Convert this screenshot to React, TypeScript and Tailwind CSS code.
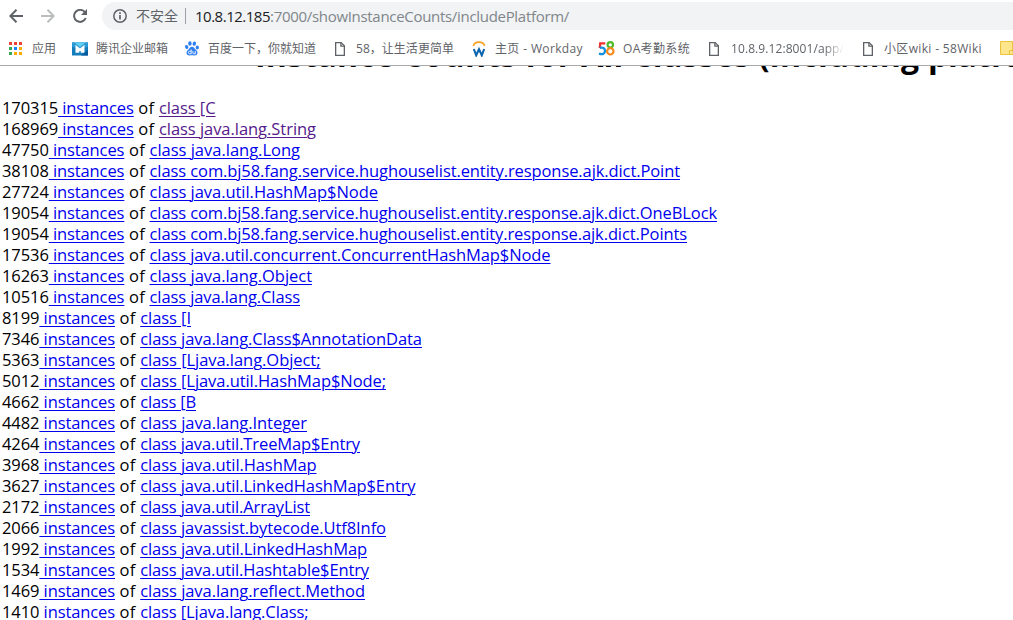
import { useLayoutEffect, useRef } from "react";
import type { ReactNode } from "react";

/** Text tracked so that it fills exactly the given width. */
function Fit({ text, width, className = "" }: { text: string; width: number; className?: string }) {
  const ref = useRef<HTMLSpanElement>(null);
  useLayoutEffect(() => {
    const el = ref.current;
    if (!el) return;
    el.style.letterSpacing = "0px";
    const natural = el.getBoundingClientRect().width;
    el.style.letterSpacing = `${(width - natural) / text.length}px`;
  }, [text, width]);
  return (
    <span ref={ref} className={`shrink-0 whitespace-pre ${className}`}>
      {text}
    </span>
  );
}

type Row = [count: string, name: string, end: number];

const rows: Row[] = [
  ["170315", "[C", 215.5],
  ["168969", "java.lang.String", 316],
  ["47750", "java.lang.Long", 300],
  ["38108", "com.bj58.fang.service.hughouselist.entity.response.ajk.dict.Point", 680],
  ["27724", "java.util.HashMap$Node", 378],
  ["19054", "com.bj58.fang.service.hughouselist.entity.response.ajk.dict.OneBLock", 717],
  ["19054", "com.bj58.fang.service.hughouselist.entity.response.ajk.dict.Points", 687],
  ["17536", "java.util.concurrent.ConcurrentHashMap$Node", 550.5],
  ["16263", "java.lang.Object", 312],
  ["10516", "java.lang.Class", 300],
  ["8199", "[I", 191],
  ["7346", "java.lang.Class$AnnotationData", 422],
  ["5363", "[Ljava.lang.Object;", 320.5],
  ["5012", "[Ljava.util.HashMap$Node;", 386],
  ["4662", "[B", 196],
  ["4482", "java.lang.Integer", 307],
  ["4264", "java.util.TreeMap$Entry", 360],
  ["3968", "java.util.HashMap", 316.5],
  ["3627", "java.util.LinkedHashMap$Entry", 415.5],
  ["2172", "java.util.ArrayList", 310],
  ["2066", "javassist.bytecode.Utf8Info", 386],
  ["1992", "java.util.LinkedHashMap", 367],
  ["1534", "java.util.Hashtable$Entry", 369],
  ["1469", "java.lang.reflect.Method", 365],
  ["1410", "[Ljava.lang.Class;", 308.5],
];

function InstanceRow({ row: [count, name, end], visited }: { row: Row; visited: boolean }) {
  const digits = count.length * 9.35;
  const start = 2 + digits + 75.6 + 25.2;
  const link = "underline decoration-1 underline-offset-2";
  return (
    <div className="flex h-[21px]">
      <Fit text={count} width={digits} />
      <a className="flex text-[#0000ee]">
        <Fit text=" instances" width={75.6} className={link} />
      </a>
      <Fit text=" of " width={25.2} />
      <a className={`flex ${visited ? "text-[#551a8b]" : "text-[#0000ee]"}`}>
        <Fit text={`class ${name}`} width={end - start} className={link} />
      </a>
    </div>
  );
}

function AppsIcon() {
  const colors = ["#ea4335", "#ea4335", "#ea4335", "#34a853", "#1a82f7", "#fbab00", "#34a853", "#fbab00", "#fbab00"];
  return (
    <svg width="14" height="14" viewBox="0 0 14 14" shapeRendering="crispEdges">
      {colors.map((c, i) => (
        <rect key={i} x={(i % 3) * 5} y={Math.floor(i / 3) * 5} width="3" height="3" fill={c} />
      ))}
    </svg>
  );
}

function MailIcon() {
  return (
    <svg width="16" height="14" viewBox="0 0 16 14">
      <rect width="16" height="13" y=".5" fill="#147dbb" />
      <path d="M0 .5h16v4L8 8 0 4.500z" fill="#2b9bd7" />
      <path d="M2.500.5h11L8 5z" fill="#62d0f5" />
      <path d="M3.500 2.800 8 6.500l4.500-3.700v7.900h-9z" fill="#fff" />
      <path d="M6.700 10.700 8 8.500l1.300 2.200z" fill="#147dbb" />
      <path d="m12.500 10.700 3.500-3v5.800H9z" fill="#075b9c" />
    </svg>
  );
}

function BaiduIcon() {
  return (
    <svg width="14" height="15" viewBox="0 0 14 15" fill="#2d7ff0">
      <ellipse cx="4.900" cy="2.500" rx="1.700" ry="2.300" />
      <ellipse cx="9.300" cy="2.600" rx="1.700" ry="2.200" transform="rotate(12 9.300 2.600)" />
      <ellipse cx="1.700" cy="6" rx="1.600" ry="2.100" transform="rotate(-12 1.700 6)" />
      <ellipse cx="12.300" cy="6.500" rx="1.600" ry="2.100" />
      <path d="M7 5.800c1.800 0 2.500 1.700 3.800 2.900 1.300 1.100 2 2.200 1.600 3.800-.4 1.700-2 2.100-3.400 1.900-1.300-.2-2.700-.2-4 0-1.400.2-3-.2-3.400-1.900-.4-1.600.4-2.700 1.600-3.800C4.500 7.500 5.200 5.800 7 5.800z" />
      <path d="M6.200 8.500v4.300H4.700a1.200 1.200 0 0 1 0-2.600h1.500M7.900 10v2q0 .8.800.8h1.600V10" fill="none" stroke="#fff" strokeWidth=".9" />
    </svg>
  );
}

function PageIcon() {
  return (
    <svg width="10" height="14" viewBox="0 0 10 14" fill="none" stroke="#5f6368" strokeWidth="1.300">
      <path d="M.65.65h5.500l3.200 3.200v9.500H.65z" />
      <path d="M5.900.7v3.500h3.400" />
    </svg>
  );
}

function WorkdayIcon() {
  return (
    <svg width="14" height="16" viewBox="0 0 14 16" fill="none">
      <path d="M1.300 5C2 2.600 4 1.100 6.900 1.100S12 2.600 12.700 5" stroke="#f5a01e" strokeWidth="1.600" />
      <path d="m1.800 8 2.400 6.300L7 8.300l2.800 6L12.200 8" stroke="#0b65ad" strokeWidth="2.100" />
    </svg>
  );
}

function FiveEightIcon() {
  return (
    <svg width="17" height="15" viewBox="0 0 17 15" fill="none">
      <path d="M7.300 2.300H2.200L1.800 7" stroke="#f0322d" strokeWidth="2.300" />
      <path d="M1.800 6.800c3-.8 5.200.4 5.200 3.100 0 3-2.700 3.900-6 2.800" stroke="#168fe3" strokeWidth="2.300" />
      <circle cx="12.300" cy="3.800" r="2.700" stroke="#4dbb28" strokeWidth="2.100" />
      <circle cx="12.300" cy="10.300" r="3.200" stroke="#f78a1d" strokeWidth="2.200" />
    </svg>
  );
}

function FolderIcon() {
  return (
    <svg width="13" height="15" viewBox="0 0 13 15">
      <path d="M.5.5h12v13H.5z" fill="#ffe58b" stroke="#eac33d" />
      <path d="M9.500 9.500h3.500v4H9.500z" fill="#ffe58b" stroke="#eac33d" />
    </svg>
  );
}

function Bookmark({ icon, text, width, gap, className = "" }: { icon: ReactNode; text: string; width: number; gap: string; className?: string }) {
  return (
    <div className={`flex shrink-0 items-center ${gap} ${className}`}>
      <span className="flex h-4 shrink-0 items-center">{icon}</span>
      <Fit text={text} width={width} />
    </div>
  );
}

export default function App() {
  return (
    <div className="h-[620px] w-[1013px] overflow-hidden bg-white font-['Open_Sans','Noto_Sans_CJK_SC',sans-serif] text-black">
      <header className="h-[66px] border-b border-[#a9a9ab]">
        <div className="flex h-8 items-center">
          <div className="flex w-[102px] shrink-0 items-center pl-[9px]">
            <svg width="14" height="14" viewBox="0 0 14 14" fill="none" stroke="#5f6368" strokeWidth="2">
              <path d="M14 7H1.500M7.500.8 1.300 7l6.200 6.200" />
            </svg>
            <svg className="ml-[18px]" width="14" height="14" viewBox="0 0 14 14" fill="none" stroke="#babcbe" strokeWidth="2">
              <path d="M0 7h12.500M6.500.8 12.700 7l-6.200 6.200" />
            </svg>
            <svg className="ml-[18px]" width="14" height="14" viewBox="0 0 14 14">
              <path d="M12 3.400A6 6 0 1 0 12.700 9" fill="none" stroke="#5f6368" strokeWidth="2" />
              <path d="M14 0v6H8z" fill="#5f6368" />
            </svg>
          </div>
          <div className="flex h-7 flex-1 items-center rounded-l-full bg-[#f1f3f4] pl-[11px]">
            <svg width="14" height="14" viewBox="0 0 14 14" fill="none" stroke="#5f6368">
              <circle cx="7" cy="7" r="6.200" strokeWidth="1.500" />
              <path d="M7 6v4.500M7 3.300v1.600" strokeWidth="1.700" />
            </svg>
            <Fit text="不安全" width={42} className="ml-[9px] text-[14px] leading-5 text-[#5f6368]" />
            <span className="mr-[9px] ml-[7px] h-4 w-px bg-[#9aa0a6]" />
            <Fit text="10.8.12.185" width={75} className="text-[15px] leading-5 text-[#202124]" />
            <Fit text=":7000/showInstanceCounts/includePlatform/" width={299} className="text-[15px] leading-5 text-[#80868b]" />
          </div>
        </div>
        <nav className="flex h-[33px] items-center overflow-hidden pl-[9px] text-[12px] leading-4 text-[#5f6368]">
          <Bookmark icon={<AppsIcon />} text="应用" width={24} gap="gap-[9px]" />
          <Bookmark icon={<MailIcon />} text="腾讯企业邮箱" width={72} gap="gap-[8px]" className="ml-[16px]" />
          <Bookmark icon={<BaiduIcon />} text="百度一下，你就知道" width={108} gap="gap-[9px]" className="ml-[17px]" />
          <Bookmark icon={<PageIcon />} text="58，让生活更简单" width={98} gap="gap-[11px]" className="ml-[19px]" />
          <Bookmark icon={<WorkdayIcon />} text="主页 - Workday" width={88} gap="gap-[9px]" className="ml-[18px]" />
          <Bookmark icon={<FiveEightIcon />} text="OA考勤系统" width={67} gap="gap-[8px]" className="ml-[15px]" />
          <div className="ml-[19px] w-[135px] shrink-0 overflow-hidden [mask-image:linear-gradient(to_right,black_115px,transparent)]">
            <Bookmark icon={<PageIcon />} text="10.8.9.12:8001/app/" width={113} gap="gap-[12px]" />
          </div>
          <Bookmark icon={<PageIcon />} text="小区wiki - 58Wiki" width={98} gap="gap-[11px]" className="ml-[19px]" />
          <span className="ml-[18px] shrink-0">
            <FolderIcon />
          </span>
        </nav>
      </header>
      <main>
        <div className="flex h-[31px] items-end overflow-hidden pl-[255px]">
          <h1 className="mb-[21px] flex text-[32px] leading-[42px] font-bold">
            <Fit text="Instance Counts for All Classes (including " width={673} />
            <Fit text="platform)" width={150} />
          </h1>
        </div>
        <div className="pl-[2px] text-[16.500px] leading-[21px]">
          {rows.map((row, i) => (
            <InstanceRow key={i} row={row} visited={i < 2} />
          ))}
        </div>
      </main>
    </div>
  );
}
